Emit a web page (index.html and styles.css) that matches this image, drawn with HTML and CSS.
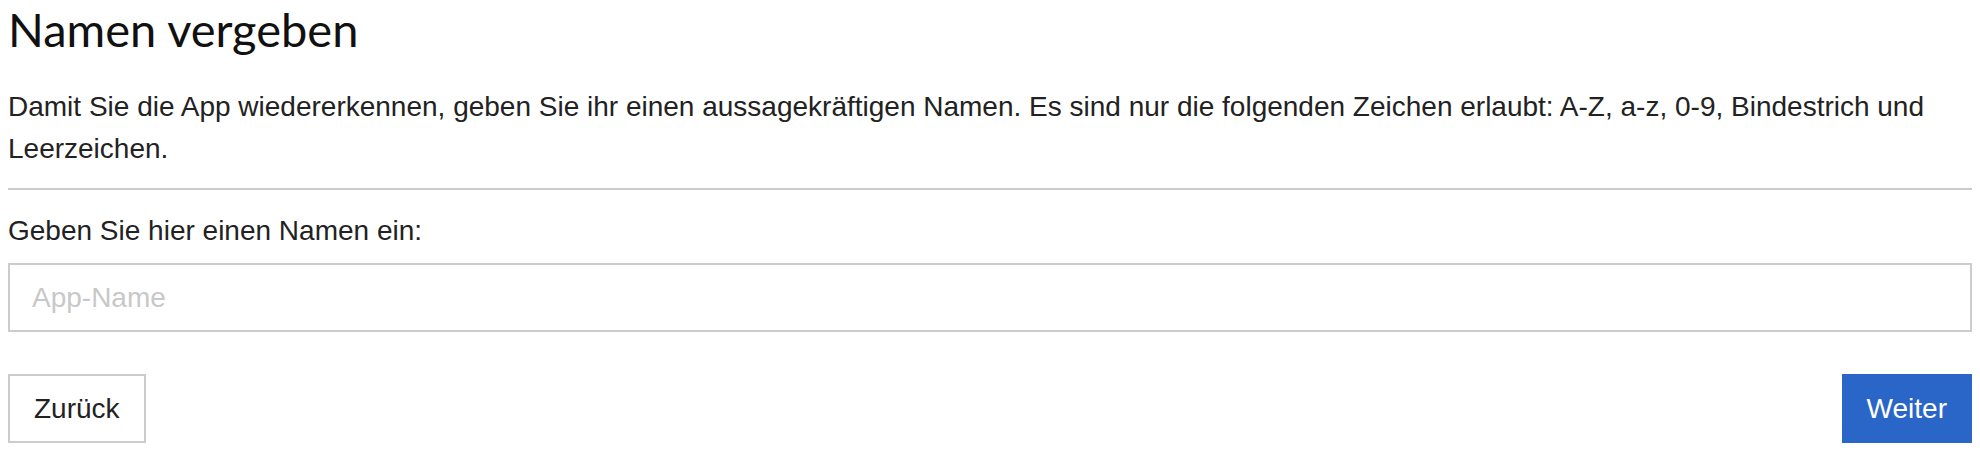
FILE: index.html
```html
<!DOCTYPE html>
<html lang="de">
<head>
  <meta charset="UTF-8">
  <meta name="viewport" content="width=device-width, initial-scale=1.0">
  <title>Namen vergeben</title>
  <link rel="stylesheet" href="styles.css">
</head>
<body>
  <div class="page">
    <h1>Namen vergeben</h1>
    <p class="intro">Damit Sie die App wiedererkennen, geben Sie ihr einen aussagekräftigen Namen. Es sind nur die folgenden Zeichen erlaubt: A-Z, a-z, 0-9, Bindestrich und Leerzeichen.</p>
    <hr class="divider">
    <label class="name-label" for="appName">Geben Sie hier einen Namen ein:</label>
    <input type="text" id="appName" class="name-input" placeholder="App-Name">
    <div class="actions">
      <button class="btn">Zurück</button>
      <button class="btn btn-primary">Weiter</button>
    </div>
  </div>
</body>
</html>
```

FILE: styles.css
```css
body {
  margin: 0;
  font-family: "Liberation Sans", Arial, sans-serif;
  color: #222;
  background: #fff;
}
.page {
  padding: 0 8px;
}
h1 {
  font-family: Lato, "Open Sans", sans-serif;
  font-weight: 400;
  font-size: 47px;
  line-height: 58px;
  margin: 0;
  color: #111;
}
.intro {
  font-size: 28px;
  line-height: 42px;
  margin: 28px 0 18px;
}
.divider {
  border: 0;
  border-top: 2px solid #ccc;
  margin: 0;
}
.name-label {
  display: block;
  font-size: 28px;
  line-height: 42px;
  margin: 20px 0 11px;
}
.name-input {
  display: block;
  width: 100%;
  height: 69px;
  box-sizing: border-box;
  border: 2px solid #ccc;
  padding: 0 22px;
  font-family: inherit;
  font-size: 28px;
  color: #222;
  outline: none;
}
.name-input::placeholder {
  color: #c8c8c8;
}
.actions {
  display: flex;
  justify-content: space-between;
  margin-top: 42px;
}
.btn {
  height: 69px;
  padding: 0 24px;
  font-family: inherit;
  font-size: 28px;
  color: #222;
  background: #fff;
  border: 2px solid #ccc;
  cursor: pointer;
}
.btn-primary {
  padding: 0 23px;
  color: #fff;
  background: #2a66c7;
  border-color: #2a66c7;
}
```
